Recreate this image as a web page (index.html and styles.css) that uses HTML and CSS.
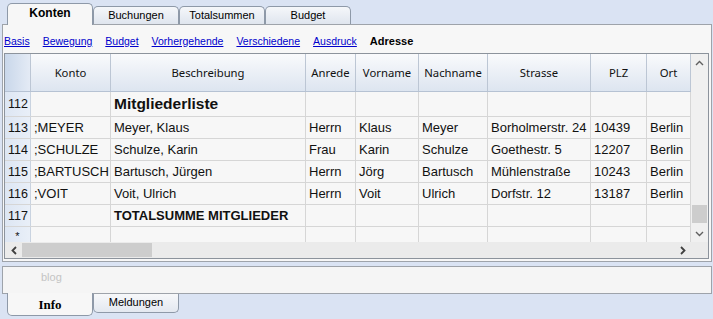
FILE: index.html
```html
<!DOCTYPE html>
<html lang="de">
<head>
  <meta charset="UTF-8">
  <title>Konten - Adresse</title>
  <link rel="stylesheet" href="styles.css">
</head>
<body>
  <div class="tabbar">
    <div class="tab active">Konten</div>
    <div class="tab">Buchungen</div>
    <div class="tab">Totalsummen</div>
    <div class="tab">Budget</div>
  </div>

  <div class="panel">
    <div class="links">
      <a href="#">Basis</a>
      <a href="#">Bewegung</a>
      <a href="#">Budget</a>
      <a href="#">Vorhergehende</a>
      <a href="#">Verschiedene</a>
      <a href="#">Ausdruck</a>
      <span class="current">Adresse</span>
    </div>

    <div class="grid">
      <div class="grid-main">
        <div class="table">
          <div class="row head">
            <div class="c num"></div>
            <div class="c konto">Konto</div>
            <div class="c besch">Beschreibung</div>
            <div class="c anrede">Anrede</div>
            <div class="c vorname">Vorname</div>
            <div class="c nachname">Nachname</div>
            <div class="c strasse">Strasse</div>
            <div class="c plz">PLZ</div>
            <div class="c ort">Ort</div>
          </div>
          <div class="row tall">
            <div class="c num">112</div>
            <div class="c konto"></div>
            <div class="c besch title">Mitgliederliste</div>
            <div class="c anrede"></div>
            <div class="c vorname"></div>
            <div class="c nachname"></div>
            <div class="c strasse"></div>
            <div class="c plz"></div>
            <div class="c ort"></div>
          </div>
          <div class="row">
            <div class="c num">113</div>
            <div class="c konto">;MEYER</div>
            <div class="c besch">Meyer, Klaus</div>
            <div class="c anrede">Herrn</div>
            <div class="c vorname">Klaus</div>
            <div class="c nachname">Meyer</div>
            <div class="c strasse">Borholmerstr. 24</div>
            <div class="c plz">10439</div>
            <div class="c ort">Berlin</div>
          </div>
          <div class="row">
            <div class="c num">114</div>
            <div class="c konto">;SCHULZE</div>
            <div class="c besch">Schulze, Karin</div>
            <div class="c anrede">Frau</div>
            <div class="c vorname">Karin</div>
            <div class="c nachname">Schulze</div>
            <div class="c strasse">Goethestr. 5</div>
            <div class="c plz">12207</div>
            <div class="c ort">Berlin</div>
          </div>
          <div class="row">
            <div class="c num">115</div>
            <div class="c konto">;BARTUSCH</div>
            <div class="c besch">Bartusch, Jürgen</div>
            <div class="c anrede">Herrn</div>
            <div class="c vorname">Jörg</div>
            <div class="c nachname">Bartusch</div>
            <div class="c strasse">Mühlenstraße</div>
            <div class="c plz">10243</div>
            <div class="c ort">Berlin</div>
          </div>
          <div class="row">
            <div class="c num">116</div>
            <div class="c konto">;VOIT</div>
            <div class="c besch">Voit, Ulrich</div>
            <div class="c anrede">Herrn</div>
            <div class="c vorname">Voit</div>
            <div class="c nachname">Ulrich</div>
            <div class="c strasse">Dorfstr. 12</div>
            <div class="c plz">13187</div>
            <div class="c ort">Berlin</div>
          </div>
          <div class="row">
            <div class="c num">117</div>
            <div class="c konto"></div>
            <div class="c besch total">TOTALSUMME MITGLIEDER</div>
            <div class="c anrede"></div>
            <div class="c vorname"></div>
            <div class="c nachname"></div>
            <div class="c strasse"></div>
            <div class="c plz"></div>
            <div class="c ort"></div>
          </div>
          <div class="row last">
            <div class="c num star">*</div>
            <div class="c konto"></div>
            <div class="c besch"></div>
            <div class="c anrede"></div>
            <div class="c vorname"></div>
            <div class="c nachname"></div>
            <div class="c strasse"></div>
            <div class="c plz"></div>
            <div class="c ort"></div>
          </div>
        </div>

        <!-- vertical scrollbar -->
        <div class="vscroll">
          <div class="arrow">
            <svg width="9" height="6" viewBox="0 0 9 6"><polyline points="1,5 4.5,1.5 8,5" fill="none" stroke="#606060" stroke-width="1.4"/></svg>
          </div>
          <div class="spacer"></div>
          <div class="vthumb"></div>
          <div class="arrow">
            <svg width="9" height="6" viewBox="0 0 9 6"><polyline points="1,1 4.5,4.5 8,1" fill="none" stroke="#606060" stroke-width="1.4"/></svg>
          </div>
        </div>
      </div>

      <!-- horizontal scrollbar -->
      <div class="hscroll">
        <div class="arrow">
          <svg width="6" height="9" viewBox="0 0 6 9"><polyline points="5,1 1.5,4.5 5,8" fill="none" stroke="#404040" stroke-width="1.8"/></svg>
        </div>
        <div class="hthumb"></div>
        <div class="spacer"></div>
        <div class="arrow">
          <svg width="6" height="9" viewBox="0 0 6 9"><polyline points="1,1 4.5,4.5 1,8" fill="none" stroke="#404040" stroke-width="1.8"/></svg>
        </div>
      </div>
    </div>
  </div>

  <div class="info">
    <span class="hint">blog</span>
  </div>

  <div class="tabbar bottom">
    <div class="tab active">Info</div>
    <div class="tab">Meldungen</div>
  </div>
</body>
</html>
```

FILE: styles.css
```css
:root {
  --bg: #dae3f3;
  --panel: #f7f7f7;
  --border: #9ea3aa;
  --tab-border: #8e99a8;
  --line: #d6d6d6;
  --link: #0000cc;
  --text: #111111;
}
body {
  margin: 0;
  width: 713px;
  height: 319px;
  overflow: hidden;
  background: var(--bg);
  color: var(--text);
  font-family: 'Liberation Sans', Arial, sans-serif;
}

/* tabs */
.tabbar {
  display: flex;
  align-items: flex-end;
  height: 24px;
  padding-left: 7px;
}
.tab {
  box-sizing: border-box;
  width: 86px;
  height: 18px;
  border: 1px solid var(--tab-border);
  border-bottom: none;
  border-radius: 5px 5px 0 0;
  background: linear-gradient(#f5f7fa, #dfe5ee);
  font-size: 11px;
  text-align: center;
  line-height: 17px;
  color: #000;
}
.tab.active {
  position: relative;
  z-index: 1;
  height: 22px;
  margin-bottom: -1px;
  background: var(--panel);
  font-weight: bold;
  font-size: 12px;
  line-height: 19px;
}

.tabbar.bottom {
  align-items: flex-start;
  height: 24px;
}
.tabbar.bottom .tab {
  height: 19px;
  border-top: none;
  border-bottom: 1px solid var(--tab-border);
  border-radius: 0 0 5px 5px;
  background: linear-gradient(#f7f8fa, #e3e8f0);
  line-height: 17px;
}
.tabbar.bottom .tab.active {
  height: 23px;
  margin-top: -1px;
  margin-bottom: 0;
  background: var(--panel);
  font-family: 'Liberation Serif', serif;
  font-size: 13px;
  line-height: 24px;
}

/* main panel */
.panel {
  box-sizing: border-box;
  width: 710px;
  height: 238px;
  margin-left: 2px;
  border: 1px solid var(--border);
  background: var(--panel);
}
.links {
  display: flex;
  gap: 13px;
  height: 28px;
  align-items: center;
  padding-left: 1px;
  padding-top: 3px;
  box-sizing: border-box;
  font-size: 10.5px;
}
.links a { color: var(--link); }
.links .current { font-weight: bold; color: #000; font-size: 11px; }

.grid {
  box-sizing: border-box;
  width: 705px;
  height: 206px;
  margin-left: 1px;
  border: 1px solid #8c939c;
  display: flex;
  flex-direction: column;
}
.grid-main {
  display: flex;
  height: 188px;
}
.table {
  width: 686px;
  overflow: hidden;
}
.row {
  display: flex;
  height: 22px;
  border-bottom: 1px solid var(--line);
  box-sizing: border-box;
}
.row.head { height: 38px; border-bottom-color: #b6c2d3; }
.row.tall { height: 25px; }
.row.last { height: 22px; border-bottom: none; }

.c {
  box-sizing: border-box;
  height: 100%;
  border-right: 1px solid var(--line);
  padding-left: 3px;
  display: flex;
  align-items: center;
  font-size: 13px;
  white-space: nowrap;
  overflow: hidden;
}
.num { width: 26px; background: linear-gradient(to right, #dde6f3, #e9eff8); border-right-color: #c9d3e0; font-size: 12.5px; }
.konto { width: 80px; }
.besch { width: 195px; }
.anrede { width: 50px; }
.vorname { width: 63px; }
.nachname { width: 69px; }
.strasse { width: 103px; }
.plz { width: 56px; }
.ort { width: 44px; }

.head .c {
  justify-content: center;
  padding-left: 0;
  background: linear-gradient(#f9fafc, #dde5f0);
  border-right-color: #bcc6d4;
  font-family: 'Noto Sans', sans-serif;
  font-size: 11.3px;
  color: #111;
}
.head .num { background: linear-gradient(to right, #c9d7ea, #e4ebf5); }
.title { font-weight: bold; font-size: 15.5px; }
.total { font-weight: bold; }
.star { justify-content: center; padding-left: 0; font-size: 11px; align-items: flex-start; padding-top: 3px; }

/* scrollbars */
.vscroll {
  width: 17px;
  display: flex;
  flex-direction: column;
  background: #f0f0f0;
}
.vscroll .arrow {
  height: 17px;
  display: flex;
  align-items: center;
  justify-content: center;
}
.vscroll .spacer { flex: 1; }
.vthumb {
  height: 18px;
  margin: 0 1px 2px 1px;
  background: #cdcdcd;
}
.hscroll {
  height: 16px;
  display: flex;
  background: #ebebeb;
  padding-right: 17px;
}
.hscroll .arrow {
  width: 17px;
  display: flex;
  align-items: center;
  justify-content: center;
}
.hthumb {
  width: 130px;
  margin: 1px 0;
  background: #cdcdcd;
}
.hscroll .spacer { flex: 1; }

/* info box */
.info {
  box-sizing: border-box;
  width: 710px;
  height: 28px;
  margin: 4px 0 0 2px;
  border: 1px solid var(--border);
  background: #f5f5f5;
  padding-left: 38px;
}
.hint {
  font-size: 11px;
  color: #c4c4c4;
  line-height: 16px;
}
```
